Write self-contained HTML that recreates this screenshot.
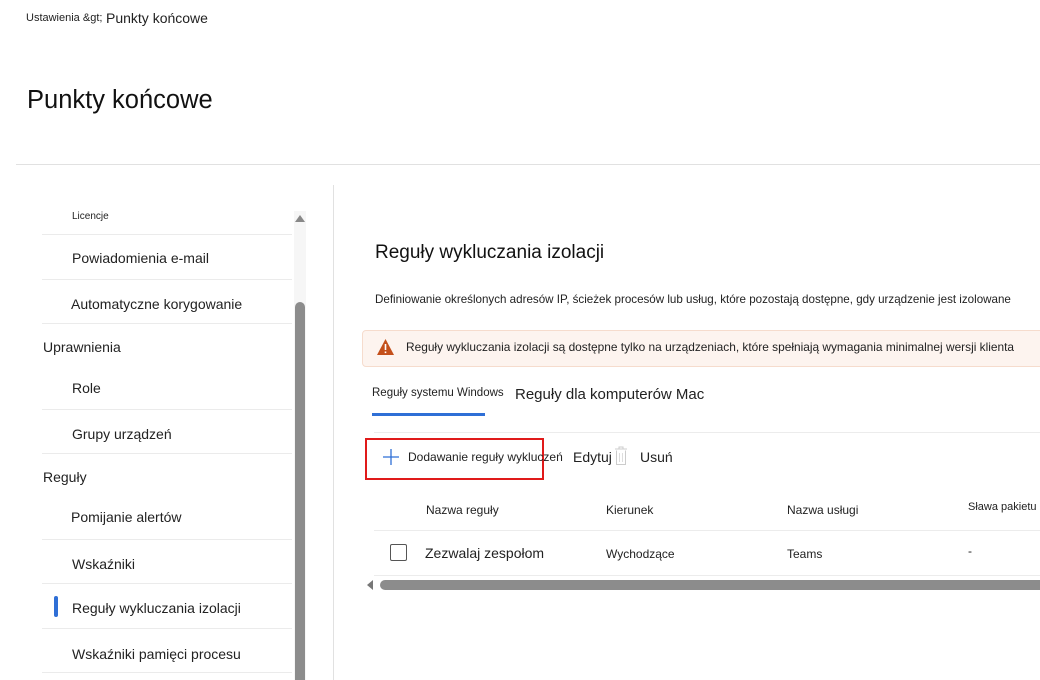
<!DOCTYPE html>
<html><head><meta charset="utf-8"><style>
body{margin:0;width:1040px;height:680px;overflow:hidden;background:#fff;font-family:"Liberation Sans",sans-serif;color:#222;position:relative}
.a{position:absolute;white-space:nowrap}
.hl{position:absolute;left:42px;width:250px;height:1px;background:#ebebeb}
.n{font-size:14px}
</style></head><body>
<div class="a" style="left:26px;top:12px;font-size:11px">Ustawienia &amp;gt;</div>
<div class="a" style="left:106px;top:10px;font-size:14px">Punkty końcowe</div>
<div class="a" style="left:27px;top:86px;font-size:25.5px;color:#111">Punkty końcowe</div>
<div class="a" style="left:16px;top:164px;width:1024px;height:1px;background:#e1e1e1"></div>
<div class="a" style="left:333px;top:185px;width:1px;height:495px;background:#e1e1e1"></div>

<div class="a" style="left:72px;top:211px;font-size:10px">Licencje</div>
<div class="hl" style="top:234px"></div>
<div class="a n" style="left:72px;top:250px">Powiadomienia e-mail</div>
<div class="hl" style="top:279px"></div>
<div class="a n" style="left:71px;top:296px">Automatyczne korygowanie</div>
<div class="hl" style="top:323px"></div>
<div class="a n" style="left:43px;top:339px">Uprawnienia</div>
<div class="a n" style="left:72px;top:380px">Role</div>
<div class="hl" style="top:409px"></div>
<div class="a n" style="left:72px;top:426px">Grupy urządzeń</div>
<div class="hl" style="top:453px"></div>
<div class="a n" style="left:43px;top:469px">Reguły</div>
<div class="a n" style="left:71px;top:509px">Pomijanie alertów</div>
<div class="hl" style="top:539px"></div>
<div class="a n" style="left:72px;top:556px">Wskaźniki</div>
<div class="hl" style="top:583px"></div>
<div class="a" style="left:54px;top:596px;width:4px;height:21px;background:#2f6fd6;border-radius:2px"></div>
<div class="a n" style="left:72px;top:600px">Reguły wykluczania izolacji</div>
<div class="hl" style="top:628px"></div>
<div class="a n" style="left:72px;top:646px">Wskaźniki pamięci procesu</div>
<div class="hl" style="top:672px"></div>
<div class="a" style="left:294px;top:211px;width:12px;height:469px;background:#f6f6f6"></div>
<div class="a" style="left:295px;top:215px;width:0;height:0;border-left:5px solid transparent;border-right:5px solid transparent;border-bottom:7px solid #888"></div>
<div class="a" style="left:295px;top:302px;width:10px;height:378px;background:#8c8c8c;border-radius:5px 5px 0 0"></div>

<div class="a" style="left:375px;top:242px;font-size:19px;color:#111">Reguły wykluczania izolacji</div>
<div class="a" style="left:375px;top:293px;font-size:11.6px">Definiowanie określonych adresów IP, ścieżek procesów lub usług, które pozostają dostępne, gdy urządzenie jest izolowane</div>
<div class="a" style="left:362px;top:330px;width:690px;height:35px;background:#fdf4ef;border:1px solid #f6dccd;border-radius:4px"></div>
<svg class="a" style="left:376px;top:338px" width="19" height="18" viewBox="0 0 19 18"><path d="M9.5 1L18 17H1z" fill="#c4501b"/><rect x="8.7" y="6" width="1.6" height="6" fill="#fff"/><rect x="8.7" y="13.5" width="1.6" height="1.6" fill="#fff"/></svg>
<div class="a" style="left:406px;top:340px;font-size:11.9px">Reguły wykluczania izolacji są dostępne tylko na urządzeniach, które spełniają wymagania minimalnej wersji klienta</div>
<div class="a" style="left:372px;top:387px;font-size:11.5px">Reguły systemu Windows</div>
<div class="a" style="left:515px;top:386px;font-size:15px">Reguły dla komputerów Mac</div>
<div class="a" style="left:372px;top:413px;width:113px;height:3px;background:#2f6fd6"></div>
<div class="a" style="left:374px;top:432px;width:666px;height:1px;background:#ececec"></div>
<div class="a" style="left:365px;top:438px;width:175px;height:38px;border:2px solid #e01a1a"></div>
<svg class="a" style="left:382px;top:448px" width="18" height="18"><path d="M9 1v16M1 9h16" stroke="#2f6fd6" stroke-width="1.3"/></svg>
<div class="a" style="left:408px;top:450px;font-size:12px">Dodawanie reguły wykluczeń</div>
<div class="a" style="left:573px;top:449px;font-size:14px">Edytuj</div>
<svg class="a" style="left:613px;top:446px" width="16" height="20"><path d="M2 3h12M6 3V1h4v2M3.5 4.5v14h9v-14" fill="none" stroke="#ccc" stroke-width="1"/><path d="M6.5 7v9M9.5 7v9" stroke="#ddd"/></svg>
<div class="a" style="left:640px;top:449px;font-size:14px">Usuń</div>
<div class="a" style="left:426px;top:503px;font-size:12px">Nazwa reguły</div>
<div class="a" style="left:606px;top:503px;font-size:12px">Kierunek</div>
<div class="a" style="left:787px;top:503px;font-size:12px">Nazwa usługi</div>
<div class="a" style="left:968px;top:501px;font-size:11px">Sława pakietu</div>
<div class="a" style="left:374px;top:530px;width:666px;height:1px;background:#ececec"></div>
<div class="a" style="left:390px;top:544px;width:17px;height:17px;border:1px solid #555;border-radius:2px;box-sizing:border-box"></div>
<div class="a" style="left:425px;top:545px;font-size:14px">Zezwalaj zespołom</div>
<div class="a" style="left:606px;top:547px;font-size:12px">Wychodzące</div>
<div class="a" style="left:787px;top:547px;font-size:12px">Teams</div>
<div class="a" style="left:968px;top:544px;font-size:12px">-</div>
<div class="a" style="left:374px;top:575px;width:666px;height:1px;background:#ececec"></div>
<div class="a" style="left:367px;top:580px;width:0;height:0;border-top:5px solid transparent;border-bottom:5px solid transparent;border-right:6px solid #777"></div>
<div class="a" style="left:380px;top:580px;width:660px;height:10px;background:#8c8c8c;border-radius:5px 0 0 5px"></div>
</body></html>
